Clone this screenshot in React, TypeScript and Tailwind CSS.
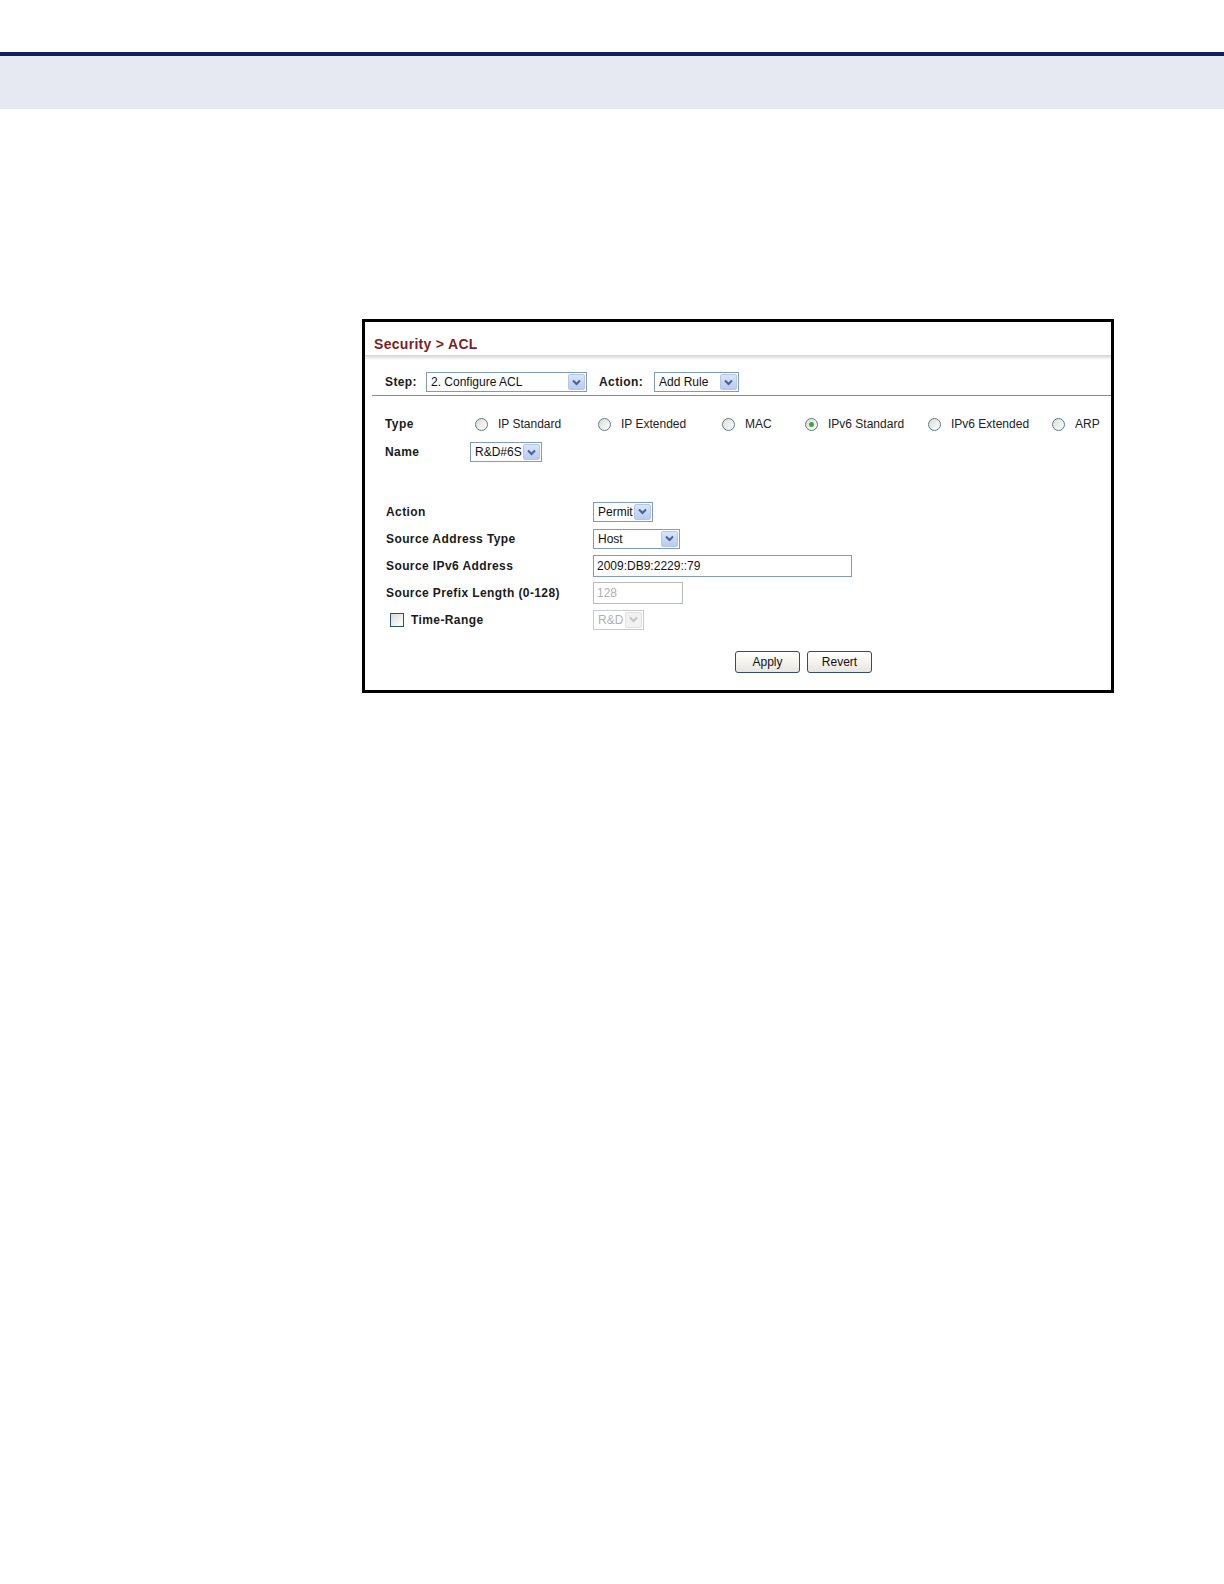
import React from 'react';

const labelCls = "font-bold text-[12px] tracking-[0.4px] text-[#1a1a1a]";

function Chevron({ disabled }: { disabled?: boolean }) {
  return (
    <svg width="9" height="7" viewBox="0 0 9 7" className="block">
      <path
        d="M1 1.5 L4.5 5 L8 1.5"
        fill="none"
        stroke={disabled ? '#c4c4c4' : '#4d6185'}
        strokeWidth="2"
      />
    </svg>
  );
}

function Select({
  value,
  width,
  disabled,
}: {
  value: string;
  width: string;
  disabled?: boolean;
}) {
  return (
    <div
      className={`${width} h-[20px] flex items-center border bg-white ${
        disabled ? 'border-[#c9cdd2]' : 'border-[#7f9db9]'
      }`}
    >
      <span
        className={`flex-1 pl-[4px] text-[12px] leading-none whitespace-nowrap ${
          disabled ? 'text-[#b0b0b0]' : 'text-[#111]'
        }`}
      >
        {value}
      </span>
      <span
        className={`w-[17px] h-[16px] mr-[1px] rounded-[2px] flex items-center justify-center border ${
          disabled
            ? 'bg-[#f1f1f1] border-[#e2e2e2]'
            : 'bg-gradient-to-b from-[#d9e4fd] to-[#b7cbf6] border-[#b3c6ef]'
        }`}
      >
        <Chevron disabled={disabled} />
      </span>
    </div>
  );
}

function Input({ value, width, disabled }: { value: string; width: string; disabled?: boolean }) {
  return (
    <div
      className={`${width} h-[22px] flex items-center border bg-white ${
        disabled ? 'border-[#b5bcc4]' : 'border-[#7f9db9]'
      }`}
    >
      <span className={`pl-[3px] text-[12px] leading-none ${disabled ? 'text-[#b0b0b0]' : 'text-[#111]'}`}>
        {value}
      </span>
    </div>
  );
}

function Radio({ label, width, checked }: { label: string; width: string; checked?: boolean }) {
  return (
    <div className={`${width} flex items-center shrink-0`}>
      <span className="w-[13px] h-[13px] rounded-full border border-[#5f7791] bg-gradient-to-br from-[#dcdcd5] to-white flex items-center justify-center">
        {checked && <span className="w-[5px] h-[5px] rounded-full bg-[#3ba83b]" />}
      </span>
      <span className="ml-[10px] text-[12px] text-[#222] whitespace-nowrap">{label}</span>
    </div>
  );
}

function Button({ children }: { children: React.ReactNode }) {
  return (
    <button
      type="button"
      className="w-[65px] h-[22px] rounded-[3px] border border-[#2f4f6f] bg-gradient-to-b from-white to-[#e8e6dc] text-[12px] text-[#111]"
    >
      {children}
    </button>
  );
}

function FormRow({ label, children }: { label: React.ReactNode; children: React.ReactNode }) {
  return (
    <div className="h-[27px] flex items-center pl-[21px]">
      <div className="w-[207px] flex items-center">{label}</div>
      {children}
    </div>
  );
}

export default function App() {
  return (
    <div className="min-h-[1584px] bg-white font-['Liberation_Sans',Arial,sans-serif]">
      <div className="h-[52px]" />
      <div className="h-[4px] bg-[#0b2160]" />
      <div className="h-[53px] bg-[#e6e9f1]" />

      <div className="pl-[362px] pt-[210px]">
        <div className="w-[752px] h-[374px] border-[3px] border-black flex flex-col">
          {/* title */}
          <div className="h-[33px] pt-[10px] pl-[9px] flex items-center">
            <span className="text-[14px] tracking-[0.3px] font-bold text-[#7a1f24] leading-none">
              Security &gt; ACL
            </span>
          </div>
          <div className="h-[5px] bg-gradient-to-b from-[#d4d4d4] to-white" />

          {/* step row */}
          <div className="pt-[12px] pl-[20px] flex items-center">
            <span className={`${labelCls} w-[41px]`}>Step:</span>
            <Select value="2. Configure ACL" width="w-[161px]" />
            <span className={`${labelCls} w-[55px] ml-[12px]`}>Action:</span>
            <Select value="Add Rule" width="w-[85px]" />
          </div>
          <div className="mt-[3px] ml-[7px] h-px bg-[#8c8c8c]" />

          {/* type / name */}
          <div className="mt-[14px] h-[28px] flex items-center pl-[20px]">
            <span className={`${labelCls} w-[90px]`}>Type</span>
            <Radio label="IP Standard" width="w-[123px]" />
            <Radio label="IP Extended" width="w-[124px]" />
            <Radio label="MAC" width="w-[83px]" />
            <Radio label="IPv6 Standard" width="w-[123px]" checked />
            <Radio label="IPv6 Extended" width="w-[124px]" />
            <Radio label="ARP" width="w-[50px]" />
          </div>
          <div className="h-[28px] flex items-center pl-[20px]">
            <span className={`${labelCls} w-[85px]`}>Name</span>
            <Select value="R&D#6S" width="w-[72px]" />
          </div>

          {/* rule fields */}
          <div className="mt-[32px]">
            <FormRow label={<span className={labelCls}>Action</span>}>
              <Select value="Permit" width="w-[60px]" />
            </FormRow>
            <FormRow label={<span className={labelCls}>Source Address Type</span>}>
              <Select value="Host" width="w-[87px]" />
            </FormRow>
            <FormRow label={<span className={labelCls}>Source IPv6 Address</span>}>
              <Input value="2009:DB9:2229::79" width="w-[259px]" />
            </FormRow>
            <FormRow label={<span className={labelCls}>Source Prefix Length (0-128)</span>}>
              <Input value="128" width="w-[90px]" disabled />
            </FormRow>
            <FormRow
              label={
                <>
                  <span className="ml-[4px] w-[14px] h-[14px] border border-[#2c4f73] bg-gradient-to-br from-[#dcdcd5] to-white" />
                  <span className={`${labelCls} ml-[7px]`}>Time-Range</span>
                </>
              }
            >
              <Select value="R&D" width="w-[51px]" disabled />
            </FormRow>
          </div>

          <div className="mt-[18px] pl-[370px] flex gap-[7px]">
            <Button>Apply</Button>
            <Button>Revert</Button>
          </div>
        </div>
      </div>
    </div>
  );
}
